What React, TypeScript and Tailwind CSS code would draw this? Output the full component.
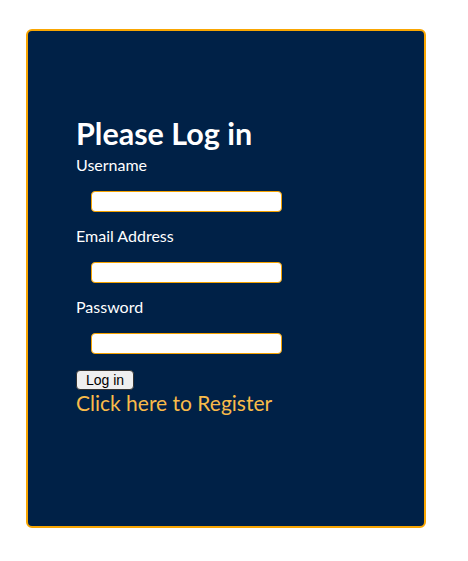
import React from 'react';

function Field({ label, type }: { label: string; type: string }) {
  return (
    <div className="flex flex-col">
      <label className="text-[16px] leading-[20px] text-white">{label}</label>
      <input
        type={type}
        className="mt-[16px] ml-[15px] h-[21px] w-[191px] rounded-[4px] border border-[#f5a200] bg-white outline-none"
      />
    </div>
  );
}

export default function App() {
  return (
    <div className="min-h-[561px] bg-white pt-[29px] pl-[26px] font-['Lato',sans-serif]">
      <div className="h-[499px] w-[400px] rounded-[6px] border-2 border-[#f9a602] bg-[#002147] pl-[48px] pt-[83px]">
        <h1 className="mb-[3px] text-[30.5px] font-bold leading-[38px] text-white">Please Log in</h1>
        <div className="flex flex-col gap-[14px]">
          <Field label="Username" type="text" />
          <Field label="Email Address" type="email" />
          <Field label="Password" type="password" />
        </div>
        <button className="mt-[16px] block h-[20px] rounded-[4px] border border-[#333] bg-[#efefef] px-[9px] font-['Liberation_Sans',sans-serif] text-[14px] leading-[16px] text-black">
          Log in
        </button>
        <a href="#" className="block text-[21px] leading-[26px] text-[#f9bb4a]">
          Click here to Register
        </a>
      </div>
    </div>
  );
}
